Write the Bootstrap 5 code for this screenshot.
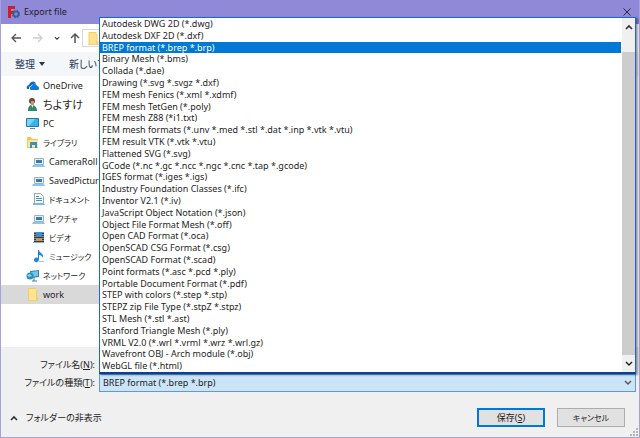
<!DOCTYPE html>
<html lang="ja">
<head>
<meta charset="utf-8">
<meta name="viewport" content="width=device-width, initial-scale=1">
<title>Export file</title>
<link rel="stylesheet" href="https://cdn.jsdelivr.net/npm/bootstrap@5.3.0/dist/css/bootstrap.min.css">
<style>
body{font-family:"Noto Sans","Noto Sans CJK JP",sans-serif;font-size:9px;line-height:12px;color:#1e1e1e;background:#f0f0f0;font-feature-settings:"palt"}
a,button{color:inherit}
svg{flex:none}
button,select,input{font:inherit;font-feature-settings:inherit}
.plain{background:none;border:0;padding:0;line-height:12px}
.dialog{border:1px solid #a5a0e0;border-top:0}
.titlebar{background:#9089d8;height:24px;padding:0 8px 0 6px}
.navbar-row{background:#fff;height:28px;padding-left:9px;gap:2px}
.nav-keys{gap:10px}
.plain svg{display:block}
.address{border:1px solid #d9d9d9;height:18px;padding:0 3px;margin-right:6px}
.toolbar-row{background:#f5f6f7;height:24px;padding-left:14px;gap:24px;color:#1e395b;font-size:10px}
.browser{background:#fff}
.tree{width:98px}
.tree a{height:19px;padding-left:25px;gap:4px;white-space:nowrap;overflow:hidden}
.tree a.sub{padding-left:31px}
.tree a.current{background:#d9d9d9}
.tree .hira{font-size:11px}
.tree .kana{font-size:8px}
.tree svg{width:13px;height:13px}
.form-area{padding:9px 3px 0 0}
.form-area label{width:98px;padding-right:4px;text-align:right;flex:none}
.field{height:18px;border:1px solid #7a7a7a;border-radius:0;padding:0 3px;background:#fff}
.type-select{appearance:none;height:18px;border:1px solid #5b9bd8;border-radius:0;background:#cce4f7;padding:0 20px 0 3px;color:#1e1e1e}
.type-arrow{right:4px;top:6px;pointer-events:none;color:#555}
.formats{left:0;right:0;bottom:100%;height:357px;background:#fff;border:1px solid #1f66d0;border-bottom:2px solid #0a3e98;box-shadow:2px 1px 2px #0006;z-index:5}
.options li{flex:1 1 0;min-height:0;line-height:12px;padding-left:2px;white-space:nowrap}
.options li.active{background:#0078d7;color:#fff}
.scroller{width:13px;margin-left:1px;background:#f0f0f0}
.scroller button{height:17px}
.scroller svg{margin:auto}
.thumb{background:#cdcdcd;margin-top:17px}
.actions{padding:16px 14px 10px 9px}
.push{width:68px;height:19px;border:1px solid #adadad;background:#e1e1e1;padding:0;border-radius:0}
.push.main{border:1px solid #0078d7;outline:1px solid #0078d7;outline-offset:-2px}
.push .kana{font-size:8px}
.grip{right:1px;bottom:1px}
</style>
<script src="https://cdn.jsdelivr.net/npm/bootstrap@5.3.0/dist/js/bootstrap.bundle.min.js"></script>
</head>
<body>
<svg width="0" height="0" class="position-absolute" aria-hidden="true">
<symbol id="pic" viewBox="0 0 13 13"><path fill="#e4f2fa" stroke="#9db0bd" d="M2.500 3.500h9v6h-9z"/><path fill="#2488cf" d="M4 5h6v2H4z"/><path fill="#4a6f86" d="M4 7l3-1 3 1v1H4z"/><path fill="#8cc6ee" d="M1 10h11l1 2H0z"/></symbol>
<symbol id="folder" viewBox="0 0 13 13"><path fill="#f3cf62" d="M2 0h8v2h1v11H2z"/><path fill="#ffe391" d="M3 1h7v11H3z"/><path fill="#f0cf6c" d="M10 9h2v4H2v-1h8z"/></symbol>
<symbol id="up" viewBox="0 0 8 6"><path fill="none" stroke="#303030" stroke-width="1.600" d="M1 5l3-3 3 3"/></symbol>
<symbol id="down" viewBox="0 0 8 6"><path fill="none" stroke="currentColor" stroke-width="1.400" d="M1 1l3 3 3-3"/></symbol>
</svg>
<main class="dialog min-vh-100 d-flex flex-column position-relative">
<header class="titlebar d-flex align-items-center">
<svg width="13" height="13" viewBox="0 0 13 13" class="me-1"><path fill="#cf1f25" d="M1 0h7v3H4v2h3v3H4v4H1z"/><circle cx="9" cy="8" r="2.500" fill="none" stroke="#315f91" stroke-width="1.600"/><circle cx="9" cy="8" r="3.800" fill="none" stroke="#315f91" stroke-dasharray="1.700 1.300"/></svg>
<span>Export file</span>
<button class="plain ms-auto" aria-label="Close"><svg width="8" height="8" viewBox="0 0 8 8"><path stroke="#29263f" d="M.5.5l7 7m0-7l-7 7"/></svg></button>
</header>
<nav class="navbar-row d-flex align-items-center">
<div class="nav-keys d-flex align-items-center">
<button class="plain" aria-label="Back"><svg width="12" height="10" viewBox="0 0 12 10"><path fill="none" stroke="#555" stroke-width="1.300" d="M11 5H2m4-4L2 5l4 4"/></svg></button>
<button class="plain" aria-label="Forward"><svg width="12" height="10" viewBox="0 0 12 10"><path fill="none" stroke="#ccc" stroke-width="1.300" d="M1 5h9M6 1l4 4-4 4"/></svg></button>
<button class="plain" aria-label="Recent"><svg width="6" height="5"><use href="#down"/></svg></button>
<button class="plain" aria-label="Up"><svg width="10" height="12" viewBox="0 0 10 12"><path fill="none" stroke="#555" stroke-width="1.500" d="M5 11V2M1 6l4-4 4 4"/></svg></button>
</div>
<div class="address flex-grow-1 d-flex align-items-center"><svg width="14" height="13" viewBox="0 0 13 13"><use href="#folder"/></svg></div>
</nav>
<div class="toolbar-row d-flex align-items-center">
<button class="plain d-flex align-items-center gap-1">整理 <svg width="6" height="4"><path fill="#1e395b" d="M0 0h6L3 4z"/></svg></button>
<button class="plain">新しいフォルダー</button>
</div>
<section class="browser flex-grow-1 d-flex">
<nav class="tree">
<a href="#" class="d-flex align-items-center text-decoration-none"><svg viewBox="0 0 13 13"><path fill="#1768bd" d="M1 10C0 7 2 6 3 6c1-4 6-5 7-1-3-1-4 1-5 2-2 0-2 2-2 3z"/><path fill="#0b79d5" d="M5 11c-2-1-1-4 1-4 0-3 4-3 5 0 2 0 3 3 1 4z"/></svg><span>OneDrive</span></a>
<a href="#" class="d-flex align-items-center text-decoration-none"><svg viewBox="0 0 13 13"><circle cx="6" cy="3" r="3" fill="#684b35"/><path fill="#c89372" d="M5 3h3v4H5z"/><path fill="#2b8a67" d="M2 13c0-5 2-6 4-6s5 2 5 6z"/><path fill="#dbe9df" d="M5 7h2v3z"/></svg><span class="hira">ちよすけ</span></a>
<a href="#" class="d-flex align-items-center text-decoration-none"><svg viewBox="0 0 13 13"><path fill="#38b4ed" stroke="#2777a5" d="M.5 1.500h12v8H.5z"/><path fill="#7bd5fa" d="M1 2h8L3 9H1z"/><path fill="#5689a5" d="M4 11h5v1H4z"/></svg><span>PC</span></a>
<a href="#" class="d-flex align-items-center text-decoration-none"><svg viewBox="0 0 13 13"><path fill="#f1c84e" d="M1 1h4l1 2h6v9H1z"/><path fill="#ffe69b" d="M2 4h10v7H2z"/><path fill="#2397d7" d="M4 6h7v6H9V9H6v3H4z"/></svg><span class="kana">ライブラリ</span></a>
<a href="#" class="sub d-flex align-items-center text-decoration-none"><svg><use href="#pic"/></svg><span>CameraRoll</span></a>
<a href="#" class="sub d-flex align-items-center text-decoration-none"><svg><use href="#pic"/></svg><span>SavedPictur</span></a>
<a href="#" class="sub d-flex align-items-center text-decoration-none"><svg viewBox="0 0 13 13"><path fill="#f4f8fb" stroke="#94a9b8" d="M2.500.5h6l3 3v7h-9z"/><path stroke="#4b92c5" d="M4 3.500h3M4 5.500h6M4 7.500h6"/><path fill="#7bb6e4" d="M1 10h11l1 2H1z"/></svg><span class="kana">ドキュメント</span></a>
<a href="#" class="sub d-flex align-items-center text-decoration-none"><svg><use href="#pic"/></svg><span class="kana">ピクチャ</span></a>
<a href="#" class="sub d-flex align-items-center text-decoration-none"><svg viewBox="0 0 13 13"><path fill="#333b4b" d="M2 1h10v10H2z"/><path fill="#3c90cf" d="M4 1h6v5H4z"/><path fill="#d89342" d="M4 7h6v3H4z"/><path stroke="#ddd" stroke-dasharray="1 1" d="M3 1v10m8-10v10"/><path fill="#7bb6e4" d="M1 11h11v1H1z"/></svg><span class="kana">ビデオ</span></a>
<a href="#" class="sub d-flex align-items-center text-decoration-none"><svg viewBox="0 0 13 13"><path fill="#1688d5" d="M6 0h1c0 3 5 3 4 8-1-2-2-3-4-3v4c0 4-5 4-5 1 0-2 2-3 4-2z"/><path fill="#9fcdec" d="M7 11h5v1H6z"/></svg><span class="kana">ミュージック</span></a>
<a href="#" class="d-flex align-items-center text-decoration-none"><svg viewBox="0 0 13 13"><path fill="#3186b5" d="M4 2l9-1v7l-8 1z"/><path fill="#72c5e8" d="M5 3l7-1v5l-7 1z"/><circle cx="4" cy="7" r="3.500" fill="#2690be"/><path fill="#8bd4db" d="M1 6l3-1 2 2-3 1z"/><path stroke="#4b7e9a" d="M8 8v4M6 12h5"/></svg><span class="kana">ネットワーク</span></a>
<a href="#" class="current d-flex align-items-center text-decoration-none"><svg><use href="#folder"/></svg><span>work</span></a>
</nav>
</section>
<section class="form-area">
<div class="d-flex align-items-center"><label for="fname">ファイル名(<u>N</u>):</label><input id="fname" class="field flex-grow-1"></div>
<div class="d-flex align-items-center">
<label for="ftype">ファイルの種類(<u>T</u>):</label>
<div class="position-relative flex-grow-1">
<select id="ftype" class="type-select w-100 d-block"><option>BREP format (*.brep *.brp)</option></select>
<svg class="type-arrow position-absolute" width="8" height="6"><use href="#down"/></svg>
<div class="formats position-absolute d-flex">
<ul class="options list-unstyled m-0 flex-grow-1 d-flex flex-column" role="listbox" aria-label="ファイルの種類">
<li role="option">Autodesk DWG 2D (*.dwg)</li>
<li role="option">Autodesk DXF 2D (*.dxf)</li>
<li role="option" class="active" aria-selected="true">BREP format (*.brep *.brp)</li>
<li role="option">Binary Mesh (*.bms)</li>
<li role="option">Collada (*.dae)</li>
<li role="option">Drawing (*.svg *.svgz *.dxf)</li>
<li role="option">FEM mesh Fenics (*.xml *.xdmf)</li>
<li role="option">FEM mesh TetGen (*.poly)</li>
<li role="option">FEM mesh Z88 (*i1.txt)</li>
<li role="option">FEM mesh formats (*.unv *.med *.stl *.dat *.inp *.vtk *.vtu)</li>
<li role="option">FEM result VTK (*.vtk *.vtu)</li>
<li role="option">Flattened SVG (*.svg)</li>
<li role="option">GCode (*.nc *.gc *.ncc *.ngc *.cnc *.tap *.gcode)</li>
<li role="option">IGES format (*.iges *.igs)</li>
<li role="option">Industry Foundation Classes (*.ifc)</li>
<li role="option">Inventor V2.1 (*.iv)</li>
<li role="option">JavaScript Object Notation (*.json)</li>
<li role="option">Object File Format Mesh (*.off)</li>
<li role="option">Open CAD Format (*.oca)</li>
<li role="option">OpenSCAD CSG Format (*.csg)</li>
<li role="option">OpenSCAD Format (*.scad)</li>
<li role="option">Point formats (*.asc *.pcd *.ply)</li>
<li role="option">Portable Document Format (*.pdf)</li>
<li role="option">STEP with colors (*.step *.stp)</li>
<li role="option">STEPZ zip File Type (*.stpZ *.stpz)</li>
<li role="option">STL Mesh (*.stl *.ast)</li>
<li role="option">Stanford Triangle Mesh (*.ply)</li>
<li role="option">VRML V2.0 (*.wrl *.vrml *.wrz *.wrl.gz)</li>
<li role="option">Wavefront OBJ - Arch module (*.obj)</li>
<li role="option">WebGL file (*.html)</li>
</ul>
<div class="scroller d-flex flex-column">
<button class="plain" aria-label="Scroll up"><svg width="8" height="6"><use href="#up"/></svg></button>
<div class="thumb flex-grow-1"></div>
<button class="plain" aria-label="Scroll down"><svg width="8" height="6"><use href="#down"/></svg></button>
</div>
</div>
</div>
</div>
</section>
<footer class="actions d-flex align-items-center">
<button class="plain d-flex align-items-center gap-1"><svg width="8" height="6" class="me-1"><use href="#up"/></svg>フォルダーの非表示</button>
<div class="ms-auto d-flex gap-2"><button class="push main me-1">保存(<u>S</u>)</button><button class="push"><span class="kana">キャンセル</span></button></div>
</footer>
<svg class="grip position-absolute" width="8" height="8"><path fill="#b5b5b5" d="M6 0h2v2H6zM3 3h2v2H3zM6 3h2v2H6zM0 6h2v2H0zM3 6h2v2H3zM6 6h2v2H6z"/></svg>
</main>
</body>
</html>
